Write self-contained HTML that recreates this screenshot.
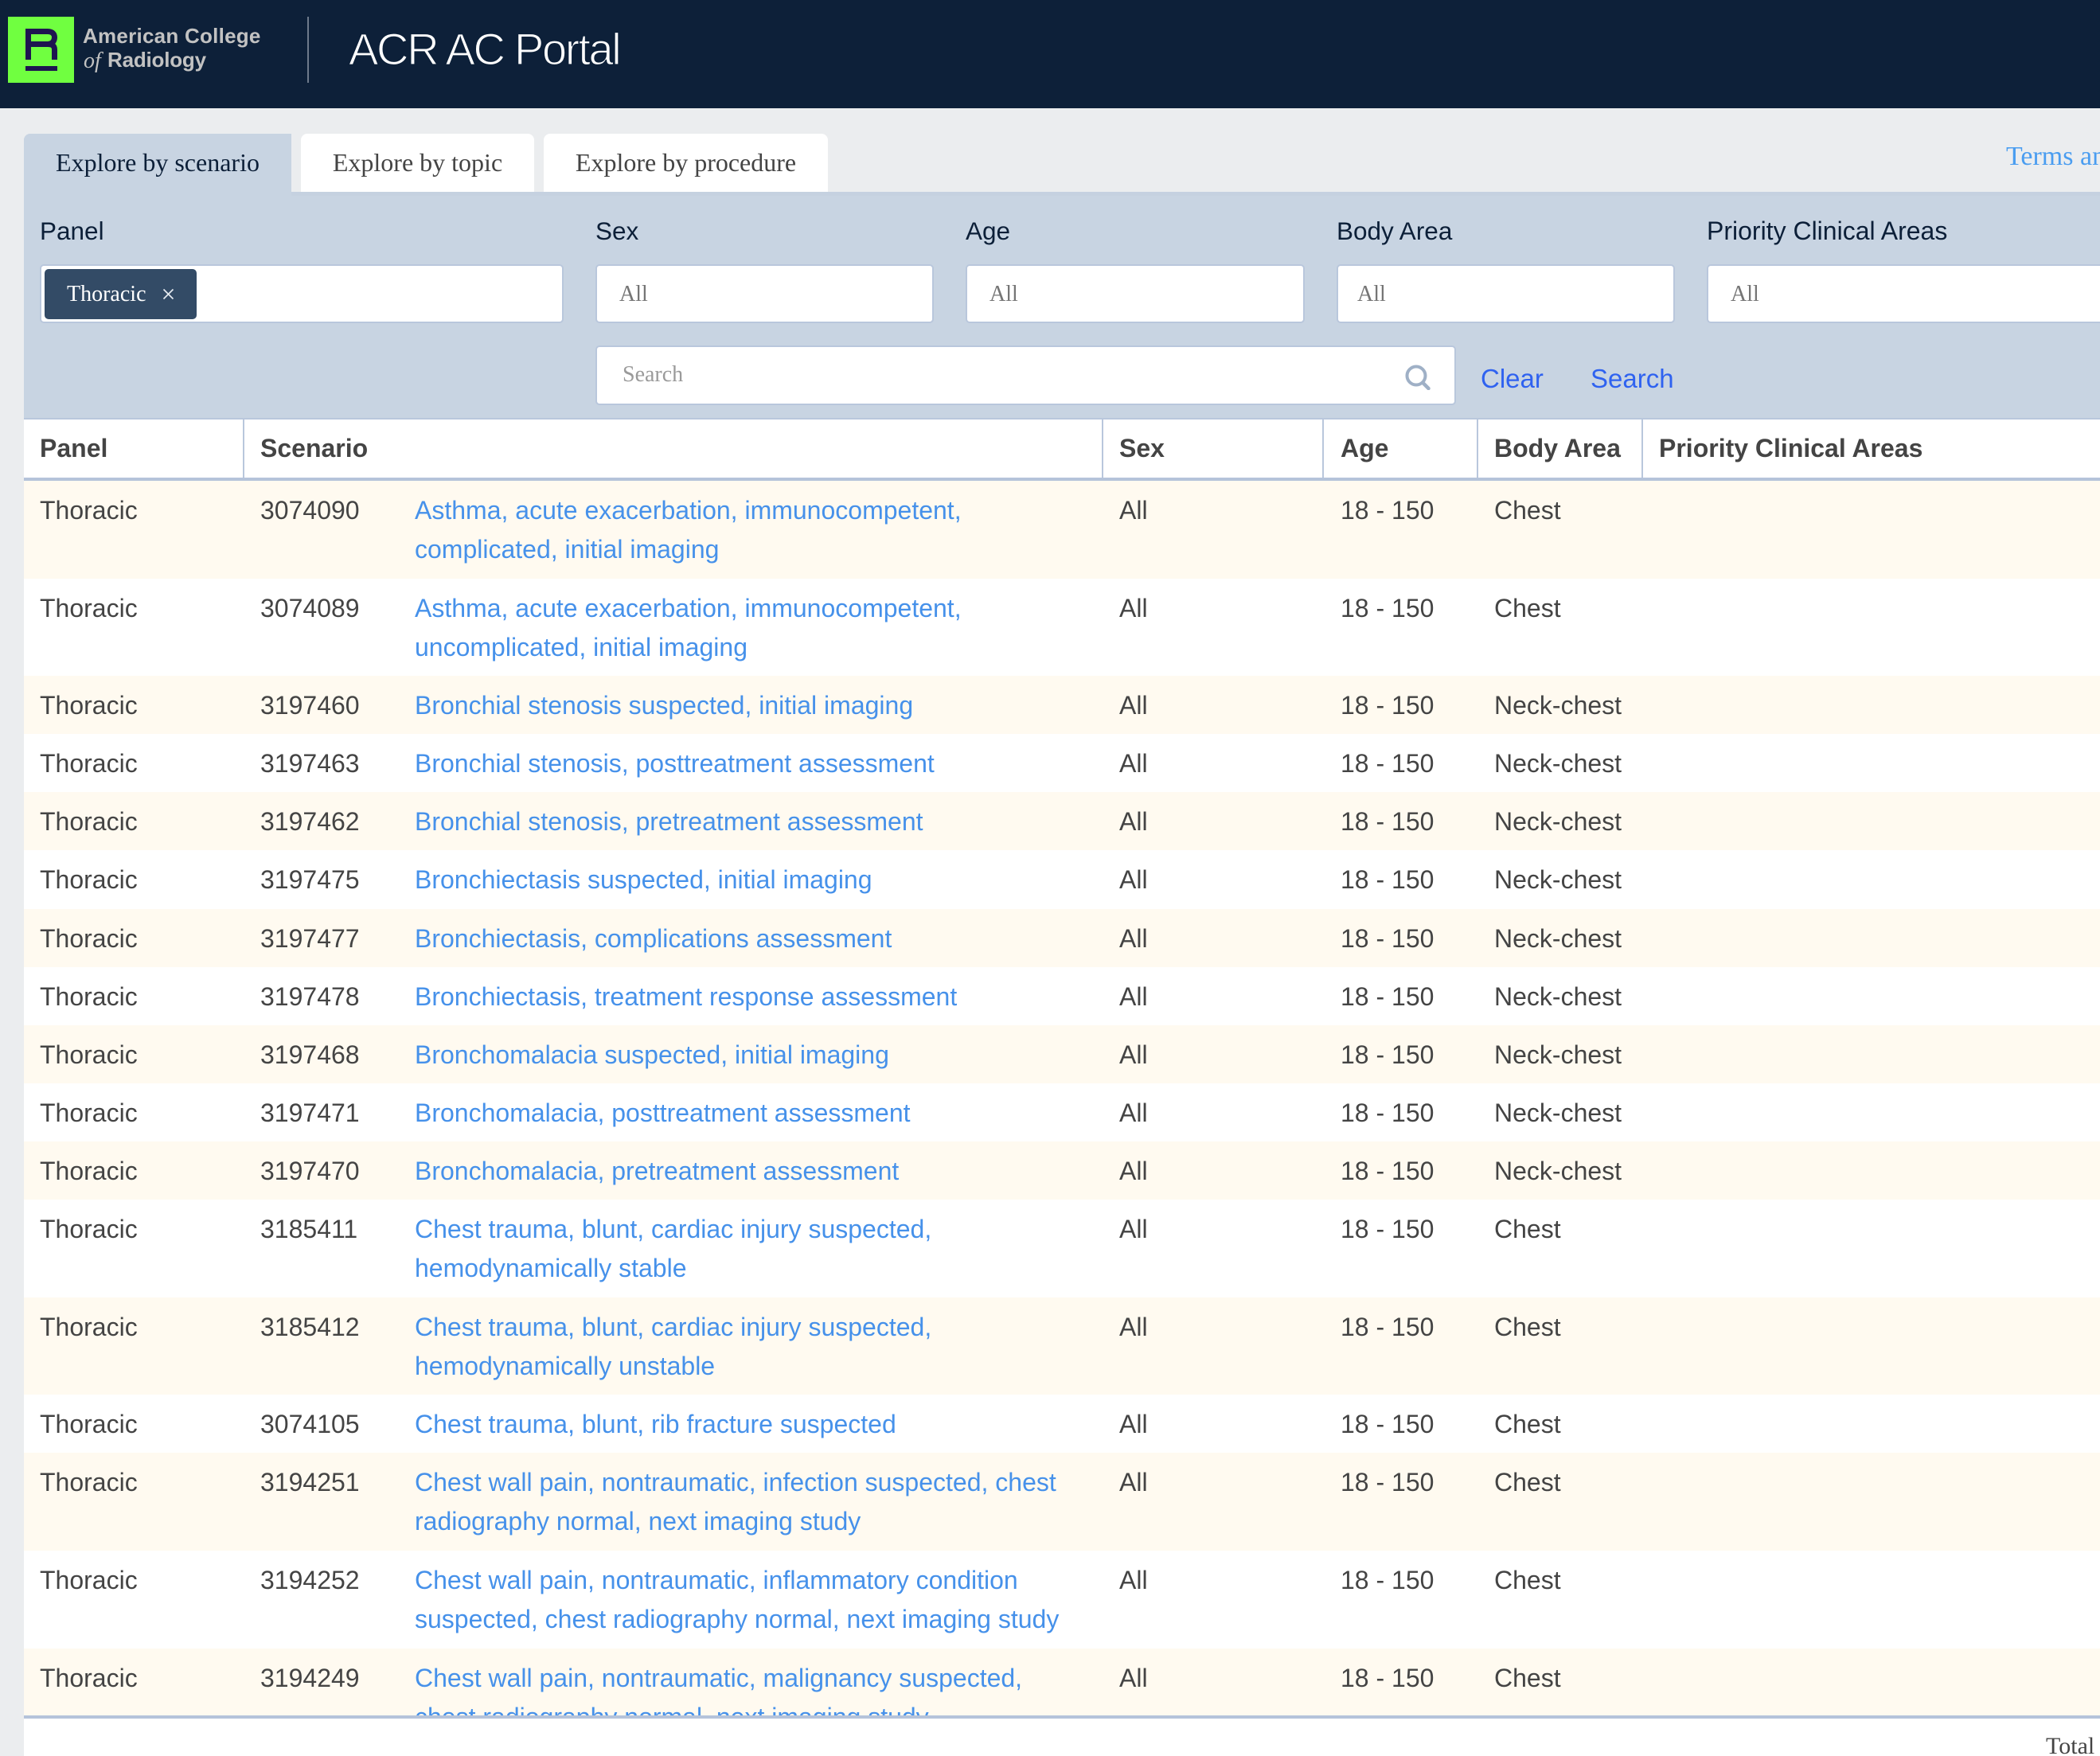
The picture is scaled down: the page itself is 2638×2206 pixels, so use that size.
<!DOCTYPE html>
<html style="overflow:hidden"><head><meta charset="utf-8"><title>ACR AC Portal</title>
<style>
*{box-sizing:border-box}
html,body{margin:0;padding:0;width:2638px;height:2206px;overflow:hidden}
body{background:#ebedef;font-family:"Liberation Sans",sans-serif;color:#444}
#page{position:relative;width:2638px;height:2206px;overflow:hidden;background:#ebedef}
.a{position:absolute;white-space:nowrap}
.serif{font-family:"Liberation Serif",serif}
.inp{position:absolute;background:#fff;border:2px solid #b9c7dc;border-radius:5px;height:74px;top:332px}
.ph{position:absolute;font-family:"Liberation Serif",serif;font-size:28px;color:#757575;top:354px;line-height:32px}
.lab{position:absolute;top:271px;font-size:31.5px;line-height:38px;color:#0c1f38;white-space:nowrap}
.tab{position:absolute;top:168px;height:73px;background:#fff;border-radius:8px 8px 0 0;font-family:"Liberation Serif",serif;font-size:32px;line-height:73px;color:#444;text-align:center}
.th{position:absolute;top:527px;height:73px;line-height:73px;font-size:32px;font-weight:bold;color:#444;white-space:nowrap}
.sep{position:absolute;top:527px;height:73px;width:2px;background:#b9c7dc}
#rows{position:absolute;left:30px;top:604px;width:2608px;height:1551px;overflow:hidden;background:#fff}
.r{position:relative;height:73.1px;font-size:32px;line-height:49px;color:#444;white-space:nowrap}
.r.d{height:122.6px}
.r.o{background:#fffaf0}
.r span{position:absolute;top:13px}
.r .p{left:20px}.r .i{left:297px}.r .t{left:491px;color:#4691ea}.r .s{left:1376px}.r .g{left:1654px}.r .b{left:1847px}
</style></head>
<body>
<div id="page">
<div class="a" style="left:0;top:0;width:2638px;height:136px;background:#0d2039"></div>
<svg class="a" style="left:10px;top:21px" width="83" height="83" viewBox="0 0 83 83">
<rect width="83" height="83" fill="#70ff40"/>
<path d="M25.500 54V18.500H50C56 18.500 58.500 22 58.500 26C58.500 31 55 34.500 50 34.500H25.500M50 34.500C56 34.500 58.500 37 58.500 41V54" fill="none" stroke="#1e1450" stroke-width="7"/>
<rect x="22" y="62" width="40" height="6" fill="#1e1450"/>
</svg>
<div class="a" style="left:104px;top:30px;font-size:26px;line-height:30px;font-weight:bold;color:#c2c2c2;letter-spacing:.25px">American College</div>
<div class="a serif" style="left:105px;top:62px;font-size:28px;line-height:30px;font-style:italic;color:#c2c2c2">of</div>
<div class="a" style="left:135px;top:60px;font-size:26px;line-height:30px;font-weight:bold;color:#c2c2c2;letter-spacing:-.2px">Radiology</div>
<div class="a" style="left:386px;top:21px;width:2px;height:83px;background:#6d7a8b"></div>
<div class="a" style="left:438px;top:29px;font-size:56px;line-height:66px;color:#fff;letter-spacing:-2.3px;-webkit-text-stroke:1.3px #0d2039">ACR AC Portal</div>

<div class="a" style="left:30px;top:168px;width:2608px;height:358px;background:#c8d4e2;border-radius:8px 0 0 0"></div>
<div class="a" style="left:366px;top:168px;width:2272px;height:73px;background:#ebedef"></div>
<div class="a" style="left:366px;top:241px;width:2272px;height:5px;background:#c5d1e0"></div>
<div class="tab" style="left:30px;width:336px;background:#c8d4e2;color:#0c1f38">Explore by scenario</div>
<div class="tab" style="left:378px;width:293px">Explore by topic</div>
<div class="tab" style="left:683px;width:357px">Explore by procedure</div>
<div class="a serif" style="left:2520px;top:177px;font-size:34px;line-height:40px;color:#4a9df0">Terms and Conditions</div>

<div class="lab" style="left:50px">Panel</div>
<div class="lab" style="left:748px">Sex</div>
<div class="lab" style="left:1213px">Age</div>
<div class="lab" style="left:1679px">Body Area</div>
<div class="lab" style="left:2144px;font-size:32px">Priority Clinical Areas</div>

<div class="inp" style="left:50px;width:658px"></div>
<div class="a" style="left:56px;top:338px;width:191px;height:63px;background:#334b66;border-radius:5px"></div>
<div class="a serif" style="left:84px;top:354px;font-size:28px;line-height:32px;color:#fff">Thoracic</div>
<svg class="a" style="left:204px;top:362px" width="15" height="15" viewBox="0 0 15 15"><path d="M1.500 1.500L13.500 13.500M13.500 1.500L1.500 13.500" stroke="#e6ebf0" stroke-width="1.700" fill="none"/></svg>
<div class="inp" style="left:748px;width:425px"></div><div class="ph" style="left:778px">All</div>
<div class="inp" style="left:1213px;width:426px"></div><div class="ph" style="left:1243px">All</div>
<div class="inp" style="left:1679px;width:425px"></div><div class="ph" style="left:1705px">All</div>
<div class="inp" style="left:2144px;width:494px;border-right:0;border-radius:5px 0 0 5px"></div><div class="ph" style="left:2174px">All</div>
<div class="inp" style="left:748px;top:434px;width:1081px;height:75px"></div>
<div class="ph" style="left:782px;top:455px;color:#9a9a9a">Search</div>
<svg class="a" style="left:1765px;top:458px" width="32" height="32" viewBox="0 0 32 32"><circle cx="14" cy="14" r="11.500" fill="none" stroke="#9fb0c6" stroke-width="4"/><path d="M22.500 23L29.500 30" stroke="#9fb0c6" stroke-width="4.500" stroke-linecap="round"/></svg>
<div class="a" style="left:1860px;top:456px;font-size:33px;line-height:40px;color:#2f62f0">Clear</div>
<div class="a" style="left:1998px;top:456px;font-size:33px;line-height:40px;color:#2f62f0">Search</div>

<div class="a" style="left:30px;top:525px;width:2608px;height:79px;background:#fff;border-top:2px solid #b9c7dc;border-bottom:4px solid #b5c3da"></div>
<div class="sep" style="left:305px"></div><div class="sep" style="left:1384px"></div><div class="sep" style="left:1661px"></div><div class="sep" style="left:1855px"></div><div class="sep" style="left:2062px"></div>
<div class="th" style="left:50px">Panel</div>
<div class="th" style="left:327px">Scenario</div>
<div class="th" style="left:1406px">Sex</div>
<div class="th" style="left:1684px">Age</div>
<div class="th" style="left:1877px">Body Area</div>
<div class="th" style="left:2084px">Priority Clinical Areas</div>

<div id="rows">
<div class="r d o"><span class="p">Thoracic</span><span class="i">3074090</span><span class="t">Asthma, acute exacerbation, immunocompetent,<br>complicated, initial imaging</span><span class="s">All</span><span class="g">18 - 150</span><span class="b">Chest</span></div>
<div class="r d"><span class="p">Thoracic</span><span class="i">3074089</span><span class="t">Asthma, acute exacerbation, immunocompetent,<br>uncomplicated, initial imaging</span><span class="s">All</span><span class="g">18 - 150</span><span class="b">Chest</span></div>
<div class="r o"><span class="p">Thoracic</span><span class="i">3197460</span><span class="t">Bronchial stenosis suspected, initial imaging</span><span class="s">All</span><span class="g">18 - 150</span><span class="b">Neck-chest</span></div>
<div class="r"><span class="p">Thoracic</span><span class="i">3197463</span><span class="t">Bronchial stenosis, posttreatment assessment</span><span class="s">All</span><span class="g">18 - 150</span><span class="b">Neck-chest</span></div>
<div class="r o"><span class="p">Thoracic</span><span class="i">3197462</span><span class="t">Bronchial stenosis, pretreatment assessment</span><span class="s">All</span><span class="g">18 - 150</span><span class="b">Neck-chest</span></div>
<div class="r"><span class="p">Thoracic</span><span class="i">3197475</span><span class="t">Bronchiectasis suspected, initial imaging</span><span class="s">All</span><span class="g">18 - 150</span><span class="b">Neck-chest</span></div>
<div class="r o"><span class="p">Thoracic</span><span class="i">3197477</span><span class="t">Bronchiectasis, complications assessment</span><span class="s">All</span><span class="g">18 - 150</span><span class="b">Neck-chest</span></div>
<div class="r"><span class="p">Thoracic</span><span class="i">3197478</span><span class="t">Bronchiectasis, treatment response assessment</span><span class="s">All</span><span class="g">18 - 150</span><span class="b">Neck-chest</span></div>
<div class="r o"><span class="p">Thoracic</span><span class="i">3197468</span><span class="t">Bronchomalacia suspected, initial imaging</span><span class="s">All</span><span class="g">18 - 150</span><span class="b">Neck-chest</span></div>
<div class="r"><span class="p">Thoracic</span><span class="i">3197471</span><span class="t">Bronchomalacia, posttreatment assessment</span><span class="s">All</span><span class="g">18 - 150</span><span class="b">Neck-chest</span></div>
<div class="r o"><span class="p">Thoracic</span><span class="i">3197470</span><span class="t">Bronchomalacia, pretreatment assessment</span><span class="s">All</span><span class="g">18 - 150</span><span class="b">Neck-chest</span></div>
<div class="r d"><span class="p">Thoracic</span><span class="i">3185411</span><span class="t">Chest trauma, blunt, cardiac injury suspected,<br>hemodynamically stable</span><span class="s">All</span><span class="g">18 - 150</span><span class="b">Chest</span></div>
<div class="r d o"><span class="p">Thoracic</span><span class="i">3185412</span><span class="t">Chest trauma, blunt, cardiac injury suspected,<br>hemodynamically unstable</span><span class="s">All</span><span class="g">18 - 150</span><span class="b">Chest</span></div>
<div class="r"><span class="p">Thoracic</span><span class="i">3074105</span><span class="t">Chest trauma, blunt, rib fracture suspected</span><span class="s">All</span><span class="g">18 - 150</span><span class="b">Chest</span></div>
<div class="r d o"><span class="p">Thoracic</span><span class="i">3194251</span><span class="t">Chest wall pain, nontraumatic, infection suspected, chest<br>radiography normal, next imaging study</span><span class="s">All</span><span class="g">18 - 150</span><span class="b">Chest</span></div>
<div class="r d"><span class="p">Thoracic</span><span class="i">3194252</span><span class="t">Chest wall pain, nontraumatic, inflammatory condition<br>suspected, chest radiography normal, next imaging study</span><span class="s">All</span><span class="g">18 - 150</span><span class="b">Chest</span></div>
<div class="r d o"><span class="p">Thoracic</span><span class="i">3194249</span><span class="t">Chest wall pain, nontraumatic, malignancy suspected,<br>chest radiography normal, next imaging study</span><span class="s">All</span><span class="g">18 - 150</span><span class="b">Chest</span></div>
</div>
<div class="a" style="left:30px;top:2155px;width:2608px;height:51px;background:#fff;border-top:4px solid #b5c3da"></div>
<div class="a serif" style="left:2570px;top:2176px;font-size:30px;line-height:36px;color:#444">Total</div>
</div>
</body></html>
